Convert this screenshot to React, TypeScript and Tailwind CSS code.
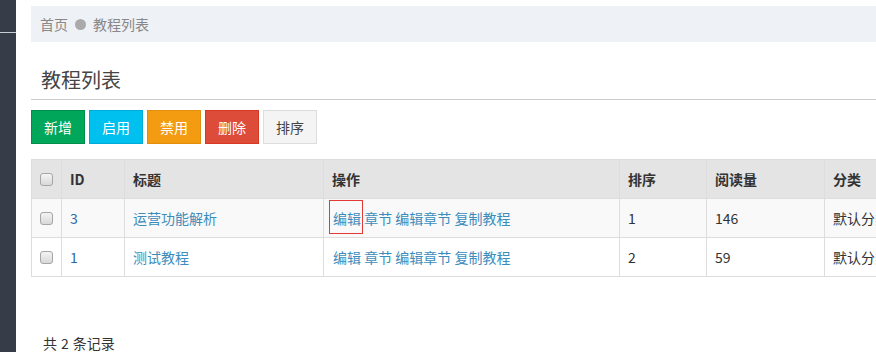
import React from 'react'

const font = { fontFamily: '"Noto Sans CJK SC", "Liberation Sans", sans-serif' }

const rows = [
  { id: 3, title: '运营功能解析', sort: 1, views: 146, cat: '默认分类', focus: true },
  { id: 1, title: '测试教程', sort: 2, views: 59, cat: '默认分类', focus: false },
]

function Check() {
  return (
    <span className="block w-[13px] h-[13px] rounded-[3px] border border-[#a6a6a6] bg-gradient-to-b from-[#f4f4f4] to-[#d8d8d8]" />
  )
}

export default function App() {
  return (
    <div className="flex w-[876px] h-[352px] overflow-hidden bg-white text-[14px] text-[#333]" style={font}>
      {/* sidebar */}
      <aside className="w-4 shrink-0 bg-[#363c48]">
        <div className="h-[32px]" />
        <div className="h-px bg-[#c9ccd3]" />
      </aside>

      <main className="flex-1 min-w-0 pl-[15px] overflow-hidden">
        <div className="mt-[6px] h-[36px] bg-[#eef1f5] flex items-center pl-[9px] text-[#888]">
          <span>首页</span>
          <span className="ml-[7px] mr-[7px] w-[11px] h-[11px] rounded-full bg-[#aaa]" />
          <span>教程列表</span>
        </div>

        <h2 className="pt-[24px] pb-[5px] pl-[10px] leading-[28px] text-[20px] font-normal border-b border-[#ccc] text-[#444]">
          教程列表
        </h2>

        <div className="mt-[10px] flex gap-[4px]">
          <button className="w-[54px] h-[34px] bg-[#00a65a] border border-[#008d4c] text-white">新增</button>
          <button className="w-[54px] h-[34px] bg-[#00c0ef] border border-[#00acd6] text-white">启用</button>
          <button className="w-[54px] h-[34px] bg-[#f39c12] border border-[#e08e0b] text-white">禁用</button>
          <button className="w-[54px] h-[34px] bg-[#dd4b39] border border-[#d73925] text-white">删除</button>
          <button className="w-[54px] h-[34px] bg-[#f4f4f4] border border-[#ddd] text-[#444]">排序</button>
        </div>

        <table className="mt-[15px] border-collapse border border-[#ddd] table-fixed w-[900px]">
          <colgroup>
            <col className="w-[30px]" />
            <col className="w-[63px]" />
            <col className="w-[199px]" />
            <col className="w-[296px]" />
            <col className="w-[87px]" />
            <col className="w-[118px]" />
            <col className="w-[107px]" />
          </colgroup>
          <thead>
            <tr className="h-[39px] bg-[#e4e4e4] text-left">
              <th className="border border-[#ddd] pl-[8px]"><Check /></th>
              <th className="border border-[#ddd] pl-[8px] font-semibold">ID</th>
              <th className="border border-[#ddd] pl-[8px] font-semibold">标题</th>
              <th className="border border-[#ddd] pl-[8px] font-semibold">操作</th>
              <th className="border border-[#ddd] pl-[8px] font-semibold">排序</th>
              <th className="border border-[#ddd] pl-[8px] font-semibold">阅读量</th>
              <th className="border border-[#ddd] pl-[8px] font-semibold whitespace-nowrap">分类</th>
            </tr>
          </thead>
          <tbody>
            {rows.map((r, i) => (
              <tr key={r.id} className={`h-[39px] ${i === 0 ? 'bg-[#f9f9f9]' : 'bg-white'}`}>
                <td className="border border-[#ddd] pl-[8px]"><Check /></td>
                <td className="border border-[#ddd] pl-[8px] text-[#2c6aa8]">{r.id}</td>
                <td className="border border-[#ddd] pl-[8px] text-[#3c8dbc]">{r.title}</td>
                <td className="border border-[#ddd] pl-[9px] text-[#3c8dbc]">
                  <span className="relative">
                    编辑
                    {r.focus && (
                      <span className="absolute -left-[4px] -right-[2px] -top-[8px] -bottom-[6px] border border-[#e53935]" />
                    )}
                  </span>{' '}
                  <span>章节</span> <span>编辑章节</span> <span>复制教程</span>
                </td>
                <td className="border border-[#ddd] pl-[8px]">{r.sort}</td>
                <td className="border border-[#ddd] pl-[8px]">{r.views}</td>
                <td className="border border-[#ddd] pl-[8px] whitespace-nowrap">{r.cat}</td>
              </tr>
            ))}
          </tbody>
        </table>

        <div className="mt-[56px] pl-[12px] flex gap-[4px]">
          <span>共</span>
          <span>2</span>
          <span>条记录</span>
        </div>
      </main>
    </div>
  )
}
